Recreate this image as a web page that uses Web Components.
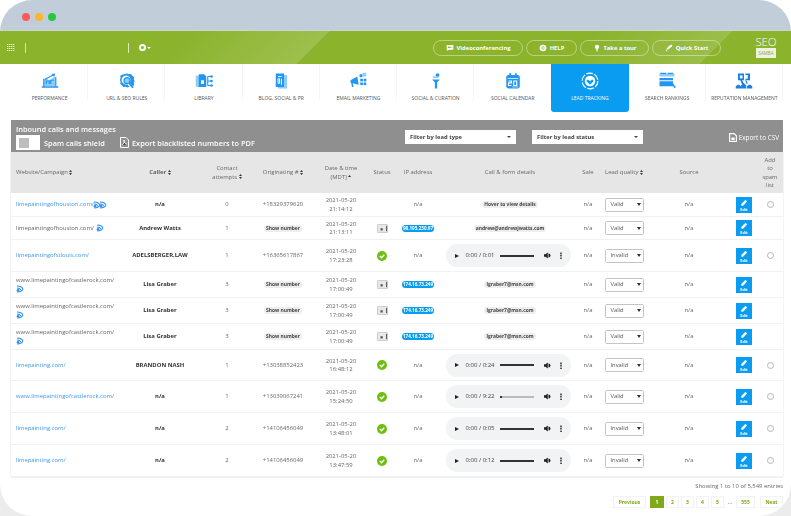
<!DOCTYPE html>
<html>
<head>
<meta charset="utf-8">
<title>Lead tracking</title>
<style>
	html, body { margin: 0; height: 516px; overflow: hidden; }
	body { background: linear-gradient(#fff 50%, #ececec 50%); font-family: "Open Sans", sans-serif; }
</style>
</head>
<body>
<seo-window>
	<app-header>
		<pill-button icon="video">Videoconferencing</pill-button>
		<pill-button icon="help" width="51">HELP</pill-button>
		<pill-button icon="tour" width="69">Take a tour</pill-button>
		<pill-button icon="rocket" width="69">Quick Start</pill-button>
	</app-header>
	<nav-bar>
		<nav-tab icon="performance">PERFORMANCE</nav-tab>
		<nav-tab icon="url">URL &amp; SEO RULES</nav-tab>
		<nav-tab icon="library">LIBRARY</nav-tab>
		<nav-tab icon="blog">BLOG, SOCIAL &amp; PR</nav-tab>
		<nav-tab icon="email">EMAIL MARKETING</nav-tab>
		<nav-tab icon="curation">SOCIAL &amp; CURATION</nav-tab>
		<nav-tab icon="calendar">SOCIAL CALENDAR</nav-tab>
		<nav-tab icon="lead" active>LEAD TRACKING</nav-tab>
		<nav-tab icon="search">SEARCH RANKINGS</nav-tab>
		<nav-tab icon="reputation">REPUTATION MANAGEMENT</nav-tab>
	</nav-bar>
	<lead-panel></lead-panel>
	<lead-table id="leads"></lead-table>
	<table-pager></table-pager>
</seo-window>

<script>
const ICONS = {
	performance: '<path fill="#8fccfa" d="M3 9h5l3 2 6-4v-1l3 1v12H3z"/><path fill="#2196f3" d="M1 19h22v2H1zM3 9h1.5v10H3zM19 7h1.5v12H19z"/><path fill="none" stroke="#2196f3" stroke-width="1.6" d="M7 16v-4h4v4M13 16v-5h4M5 10l11-6"/><path fill="#2196f3" d="M14 2.5l5-.5-1.5 4.5z"/>',
	url: '<path fill="#2196f3" d="M12 2l2.5 1 3-.5 1.500 2.500 2.500 1.500-.5 3 1 2.500-1 2.500.5 3-2 1-4-4a6 6 0 1 0-3 2l3 3-3 1-2.500-1-3 .5-1.500-2.500-2.500-1.500.5-3-1-2.500 1-2.500-.5-3 2.500-1.500L9 2.500z"/><circle cx="12" cy="11.5" r="4" fill="#8fccfa" stroke="#2196f3" stroke-width="1.6"/><path stroke="#2196f3" stroke-width="2.5" d="M15 15l5 6"/>',
	library: '<path fill="#8fccfa" d="M1 5h5v15H3a2 2 0 0 1-2-2z"/><path fill="#2196f3" d="M5 3h7l3 3v14H5z"/><path fill="#fff" d="M8 11h4v5H8z"/><path fill="none" stroke="#2196f3" stroke-width="1.5" d="M17 6h4M17 12h4M17 18h4M17 6v12"/><circle cx="22" cy="6" r="1.8" fill="#2196f3"/><circle cx="22" cy="12" r="1.8" fill="#2196f3"/><circle cx="22" cy="18" r="1.8" fill="#2196f3"/>',
	blog: '<path fill="#8fccfa" d="M15 4h5v18H8v-2h7z"/><path fill="#2196f3" d="M5 2h11v18H5z"/><path fill="none" stroke="#fff" stroke-width="1.3" d="M8 6h5M8 9v6h2V9zM12.5 9v8"/>',
	email: '<path fill="#2196f3" d="M2 11l9-5 2 11-8-2 1 5H4l-1-5.5-1-.5z"/><rect x="14" y="3" width="4" height="4" rx="1" fill="#2196f3"/><rect x="18" y="1" width="5" height="5" rx="1" fill="#8fccfa"/><rect x="15" y="9" width="3.5" height="3.5" fill="#2196f3"/><rect x="19.5" y="9" width="3.5" height="3.5" fill="#2196f3"/><rect x="15" y="14" width="3.5" height="3.5" fill="#2196f3"/><rect x="19.5" y="14" width="3.5" height="3.5" fill="#2196f3"/>',
	curation: '<circle cx="14" cy="4" r="2.5" fill="#2196f3"/><circle cx="9" cy="7" r="1.5" fill="#8fccfa"/><path fill="#2196f3" d="M7 10h10l-3.5 4v8h-3v-8z"/><path fill="#8fccfa" d="M9 6h6v2H9z"/>',
	calendar: '<rect x="3" y="4" width="18" height="18" rx="3" fill="#2196f3"/><path fill="#2196f3" d="M7 1.5h2.5V6H7zM14.5 1.5H17V6h-2.5z"/><path fill="#fff" d="M5 8h14v1H5z"/><path fill="none" stroke="#fff" stroke-width="1.5" d="M6 12h4v2.500H6V18h4M13 12h4v6h-4z"/><path fill="#8fccfa" d="M11 19h8v1.5h-8z"/>',
	lead: '<circle cx="12" cy="12" r="10.5" fill="none" stroke="#fff" stroke-width="1.6" stroke-dasharray="9 2"/><circle cx="12" cy="12" r="7" fill="#fff"/><path fill="#0a9cf0" d="M12 17l-5-5 2-2 3 2 3-2 2 2z"/>',
	search: '<path fill="#8fccfa" d="M2 2h20v4H2z"/><path fill="#2196f3" d="M2 8h18v11H2z"/><path fill="#fff" d="M2 11h18v1.3H2z"/><path stroke="#2196f3" stroke-width="2" d="M18 14l5 7"/><path fill="#2196f3" d="M3 1h8v1.5H3zM13 1h7v1.5h-7z"/>',
	reputation: '<path fill="#1a7fe0" d="M4 2h8v9H9.5l1.5 3 4 4v4H8v-4l1.5-1.5L7 11H4zM14 2h6v9h-6v-2h3V4h-3z"/><path fill="#1a7fe0" d="M1 22v-3l2.5-2h2L8 19v3zM16 22v-3l2.5-2h2L23 19v3z"/><path fill="#1a7fe0" d="M15 11l2 4-1.500 1-2-5z"/><rect x="6.5" y="4.5" width="3.5" height="4" fill="#fff"/>',
	video: '<path fill="#fff" d="M2 3h20v14H9l-5 4v-4H2z"/><path fill="#8bb32c" d="M6 8h8v4H6zM15 10l4-2v4z"/>',
	help: '<circle cx="12" cy="12" r="7.5" fill="none" stroke="#fff" stroke-width="5"/><path stroke="#fff" stroke-width="2" d="M12 2v20M2 12h20"/>',
	tour: '<circle cx="12" cy="9" r="6.5" fill="#fff"/><path fill="#fff" d="M10 15h4v7h-4z"/>',
	rocket: '<path fill="#fff" d="M22 2c-7 0-12 4-14 9l-5 2 3 1-1 3 3-1 1 3 2-5c5-2 11-6 11-12z"/><path fill="#fff" d="M2 22c0-3 1-4 3-4l1 1c0 2-1 3-4 3z"/>'
};

const svgIcon = (name, size) => `<svg width="${size}" height="${size}" viewBox="0 0 24 24" aria-hidden="true">${ICONS[name]}</svg>`;

class SeoWindow extends HTMLElement {
	constructor() {
		super();
		this.attachShadow({ mode: 'open' });
		this.shadowRoot.innerHTML = `
		<style>
			:host {
				display: block;
				height: 516px;
				background: #fff;
				border-radius: 32px;
				overflow: hidden;
				filter: blur(.5px);
			}
			.chrome {
				height: 31px;
				background: #c1ced9;
				border-bottom: 1px solid #cbd6d0;
				display: flex;
				align-items: center;
				gap: 5px;
				padding: 3px 0 0 22px;
				box-sizing: border-box;
			}
			.dot { width: 8px; height: 8px; border-radius: 50%; }
			.red { background: #fc5b57; }
			.amber { background: #fdb52b; }
			.green { background: #27c840; }
		</style>
		<div class="chrome"><i class="dot red"></i><i class="dot amber"></i><i class="dot green"></i></div>
		<slot></slot>`;
	}
}
customElements.define('seo-window', SeoWindow);

class AppHeader extends HTMLElement {
	constructor() {
		super();
		this.attachShadow({ mode: 'open' });
		this.shadowRoot.innerHTML = `
		<style>
			:host {
				display: flex;
				align-items: center;
				height: 33px;
				background:
					linear-gradient(135deg, transparent 130px, rgba(255,255,255,.16) 233px, transparent 233px),
					linear-gradient(135deg, transparent 420px, rgba(255,255,255,.14) 518px, transparent 518px),
					#8bb32c;
				color: #fff;
				font-family: "Open Sans", sans-serif;
			}
			.grid {
				width: 8px; height: 8px; margin-left: 7px;
				background:
					repeating-linear-gradient(90deg, transparent 0 1.5px, rgba(139,179,44,.75) 1.5px 2px),
					repeating-linear-gradient(#fff 0 1.5px, rgba(139,179,44,.75) 1.5px 2px);
			}
			.sep { width: 1px; height: 10px; background: rgba(255,255,255,.7); }
			.sep.one { margin-left: 10px; }
			.sep.two { margin-left: 102px; }
			.gear { margin-left: 10px; width: 7px; height: 7px; border-radius: 50%; border: 2px solid #fff; background: #8bb32c; box-sizing: border-box; }
			.caret { margin-left: 1px; border: 2px solid transparent; border-top-color: #fff; border-bottom: 0; }
			.pills { margin-left: 282px; display: flex; gap: 3px; }
			.logo {
				margin-left: 35px; width: 20px; display: flex; flex-direction: column; align-items: center;
				line-height: 1;
			}
			.seo { font-size: 11.5px; line-height: 10px; font-weight: 300; letter-spacing: -.1px; }
			.samba { margin-top: 1px; width: 20px; height: 10px; background: #eef3de; color: #8aa36a; font-size: 4.5px; line-height: 10px; text-align: center; }
		</style>
		<div class="grid"></div><div class="sep one"></div><div class="sep two"></div>
		<div class="gear"></div><div class="caret"></div>
		<div class="pills"><slot></slot></div>
		<div class="logo"><span class="seo">SEO</span><span class="samba">SAMBA</span></div>`;
	}
}
customElements.define('app-header', AppHeader);

class PillButton extends HTMLElement {
	constructor() {
		super();
		this.attachShadow({ mode: 'open' });
	}
	connectedCallback() {
		const width = this.getAttribute('width') || 90;
		this.shadowRoot.innerHTML = `
		<style>
			:host {
				display: flex;
				align-items: center;
				justify-content: center;
				gap: 3px;
				width: ${width}px;
				height: 16px;
				box-sizing: border-box;
				border: 1px solid rgba(255,255,255,.4);
				border-radius: 8px;
				font-size: 5.8px;
				font-weight: 700;
				white-space: nowrap;
			}
			svg { display: block; }
		</style>
		${svgIcon(this.getAttribute('icon'), 8)}<slot></slot>`;
	}
}
customElements.define('pill-button', PillButton);

class NavBar extends HTMLElement {
	constructor() {
		super();
		this.attachShadow({ mode: 'open' });
		this.shadowRoot.innerHTML = `
		<style>
			:host {
				display: grid;
				grid-template-columns: repeat(10, 1fr);
				height: 48px;
				margin: 0 8px 8px 11px;
				font-family: "Open Sans", sans-serif;
			}
		</style>
		<slot></slot>`;
	}
}
customElements.define('nav-bar', NavBar);

class NavTab extends HTMLElement {
	constructor() {
		super();
		this.attachShadow({ mode: 'open' });
	}
	connectedCallback() {
		const active = this.hasAttribute('active');
		this.shadowRoot.innerHTML = `
		<style>
			:host {
				display: flex;
				flex-direction: column;
				align-items: center;
				padding-top: 8px;
				box-sizing: border-box;
				font-size: 5px;
				white-space: nowrap;
				color: ${active ? '#fff' : '#555'};
				background: ${active ? '#0a9cf0' : 'transparent'};
				border-radius: 0 0 3px 3px;
			}
			:host(:not([active])) { box-shadow: inset -1px 0 0 #f6f6f6; height: 38px; }
			svg { display: block; }
			.label { margin-top: 4px; line-height: 8px; }
		</style>
		${svgIcon(this.getAttribute('icon'), 18)}<div class="label"><slot></slot></div>`;
	}
}
customElements.define('nav-tab', NavTab);

class LeadPanel extends HTMLElement {
	constructor() {
		super();
		this.attachShadow({ mode: 'open' });
		this.shadowRoot.innerHTML = `
		<style>
			:host {
				display: flex;
				height: 32px;
				margin: 0 8px 0 11px;
				padding-left: 5px;
				background: #8f8f8f;
				color: #fff;
				font-family: "Open Sans", sans-serif;
				font-size: 7.4px;
				font-weight: 600;
				box-sizing: border-box;
			}
			.left { width: 389px; padding-top: 5px; white-space: nowrap; }
			.title { line-height: 9px; height: 9px; }
			.tools { display: flex; align-items: center; margin-top: 1px; height: 15px; }
			.toggle { width: 24px; height: 15px; background: #fff; display: flex; align-items: center; padding-left: 3px; box-sizing: border-box; }
			.toggle i { width: 10px; height: 10px; background: #bdbdbd; }
			.shield { margin-left: 4px; width: 76px; }
			.pdf { width: 9px; height: 11px; margin-right: 3px; }
			.select {
				width: 111px; height: 14px; margin-top: 10px; background: #fff; color: #444;
				box-sizing: border-box; padding: 0 5px; display: flex; align-items: center; justify-content: space-between;
				font-size: 5.8px; font-weight: 700;
			}
			.select + .select { margin-left: 16px; }
			.select i { border: 2px solid transparent; border-top: 2.5px solid #444; border-bottom: 0; }
			.csv { margin-left: auto; padding-right: 4px; margin-top: 13px; display: flex; gap: 2px; align-items: center; font-size: 6.4px; font-weight: 400; height: 9px; white-space: nowrap; }
		</style>
		<div class="left">
			<div class="title">Inbound calls and messages</div>
			<div class="tools">
				<div class="toggle"><i></i></div>
				<span class="shield">Spam calls shield</span>
				<svg class="pdf" viewBox="0 0 9 11"><path fill="none" stroke="#fff" d="M.5.5h5.500l2.500 2.500v7.500h-8z"/><path stroke="#fff" d="M2 8c2-1 3-3 2-5 0 2 1 4 3 4"/></svg>
				<span>Export blacklisted numbers to PDF</span>
			</div>
		</div>
		<div class="select"><span>Filter by lead type</span><i></i></div>
		<div class="select"><span>Filter by lead status</span><i></i></div>
		<div class="csv">
			<svg width="8" height="9" viewBox="0 0 7 8"><path fill="none" stroke="#fff" d="M.5.5h4l2 2v5h-6z"/><path fill="#fff" d="M2 4h3v2.5H2z"/></svg>
			<span>Export to CSV</span>
		</div>`;
	}
}
customElements.define('lead-panel', LeadPanel);

class LeadTable extends HTMLElement {
	constructor() {
		super();
		this.attachShadow({ mode: 'open' });
		this.shadowRoot.innerHTML = `
		<style>
			:host {
				display: block;
				margin: 0 8px 0 11px;
				--cols: 109px 80px 54px 58px 58px 24px 48px 136px 20px 52px 78px 32px 23px;
				font-family: "Open Sans", sans-serif;
				font-size: 5.9px;
				line-height: 8.5px;
				color: #666;
				box-shadow: 0 1px 0 #f0f0f0, -1px 0 0 #f4f4f4, 1px 0 0 #f4f4f4;
			}
		</style>
		<slot></slot>`;
	}
}
customElements.define('lead-table', LeadTable);

class LeadRow extends HTMLElement {
	constructor() {
		super();
		this.attachShadow({ mode: 'open' });
		this.shadowRoot.innerHTML = `
		<style>
			:host {
				display: grid;
				grid-template-columns: var(--cols);
				align-items: center;
				justify-items: center;
				text-align: center;
				box-sizing: border-box;
				border-bottom: 1px solid #f1f1f1;
			}
			:host([head]) { background: #e6e6e6; border-bottom: 0; }
		</style>
		<slot></slot>`;
	}
}
customElements.define('lead-row', LeadRow);

class SourceIcon extends HTMLElement {
	constructor() {
		super();
		this.attachShadow({ mode: 'open' });
		this.shadowRoot.innerHTML = `
		<style>:host { display: inline-block; vertical-align: middle; width: 8px; height: 8px; } svg { display: block; }</style>
		<svg width="8" height="8" viewBox="0 0 8 8"><path fill="none" stroke="#2f8fee" stroke-width="1.1" d="M1 1c3 0 5 1 6 3M1 3c2 0 3 .5 4 2M1 7c3 0 5-1 6-3"/><circle cx="2" cy="5.2" r="1.3" fill="#2f8fee"/></svg>`;
	}
}
customElements.define('source-icon', SourceIcon);

class LeadChip extends HTMLElement {
	constructor() {
		super();
		this.attachShadow({ mode: 'open' });
		this.shadowRoot.innerHTML = `
		<style>
			:host {
				display: inline-block;
				padding: 0 2px;
				border-radius: 3px;
				background: #eee;
				color: #444;
				font-size: 4.9px;
				font-weight: 700;
				line-height: 7px;
				white-space: nowrap;
			}
			:host([ip]) {
				background: #0a9cf0;
				color: #fff;
				border-radius: 4px;
				padding: 0 1px;
				font-size: 4.6px;
				line-height: 7px;
			}
		</style>
		<slot></slot>`;
	}
}
customElements.define('lead-chip', LeadChip);

class StatusIcon extends HTMLElement {
	constructor() {
		super();
		this.attachShadow({ mode: 'open' });
	}
	connectedCallback() {
		const ok = this.getAttribute('type') === 'ok';
		this.shadowRoot.innerHTML = `
		<style>:host { display: block; } svg { display: block; }</style>
		${ok
			? '<svg width="10" height="10" viewBox="0 0 10 10"><circle cx="5" cy="5" r="5" fill="#6fbe12"/><path fill="none" stroke="#fff" stroke-width="1.4" d="M2.800 5l1.700 1.700 2.800-3"/></svg>'
			: '<svg width="11" height="9" viewBox="0 0 11 9"><rect width="11" height="9" rx="1.5" fill="#c8c8c8"/><rect x=".8" y=".8" width="8.500" height="7.4" fill="#e8e8e8"/><path fill="#555" d="M3.5 4.2h2.2v2.300H3.5zM9 2h.9v5H9z"/></svg>'}`;
	}
}
customElements.define('status-icon', StatusIcon);

class AudioBar extends HTMLElement {
	constructor() {
		super();
		this.attachShadow({ mode: 'open' });
	}
	connectedCallback() {
		const done = this.getAttribute('progress') || 100;
		this.shadowRoot.innerHTML = `
		<style>
			:host {
				display: flex;
				align-items: center;
				width: 125px;
				height: 23px;
				margin-right: 3px;
				background: #f1f3f4;
				border-radius: 12px;
				color: #444;
				font-size: 6px;
				white-space: nowrap;
				box-sizing: border-box;
				padding-left: 8.5px;
			}
			.play { border-left: 4px solid #222; border-top: 2.5px solid transparent; border-bottom: 2.5px solid transparent; }
			.time { margin-left: 7px; width: 34px; text-align: left; }
			.track { width: 34px; height: 2px; background: linear-gradient(90deg, #333 ${done}%, #bbb ${done}%); }
			svg { display: block; margin-left: 10.5px; }
			.dots { margin-left: 8.5px; width: 2px; height: 7px; background: radial-gradient(circle, #333 .9px, transparent 1px) 0 0 / 2px 2.5px; }
		</style>
		<div class="play"></div>
		<div class="time"><slot></slot></div>
		<div class="track"></div>
		<svg width="7" height="7" viewBox="0 0 7 7"><path fill="#222" d="M0 2.300h1.500L3.800.5v6L1.500 4.700H0z"/><path fill="#222" d="M4.500 1.500a2 2 0 0 1 0 4z"/></svg>
		<div class="dots"></div>`;
	}
}
customElements.define('audio-bar', AudioBar);

class QualitySelect extends HTMLElement {
	constructor() {
		super();
		this.attachShadow({ mode: 'open' });
		this.shadowRoot.innerHTML = `
		<style>
			:host {
				display: flex;
				align-items: center;
				justify-content: space-between;
				width: 39px;
				height: 14px;
				padding: 0 2px 0 5px;
				box-sizing: border-box;
				background: #fff;
				border: 1px solid #c4c4c4;
				border-radius: 1.5px;
				font-size: 5.8px;
				color: #555;
			}
			i { border: 2.5px solid transparent; border-top: 3px solid #333; border-bottom: 0; }
		</style>
		<span><slot></slot></span><i></i>`;
	}
}
customElements.define('quality-select', QualitySelect);

class EditButton extends HTMLElement {
	constructor() {
		super();
		this.attachShadow({ mode: 'open' });
		this.shadowRoot.innerHTML = `
		<style>
			:host {
				display: flex;
				flex-direction: column;
				align-items: center;
				width: 16px;
				height: 16px;
				background: #0a9cf0;
				color: #fff;
				font-size: 3.8px;
				font-weight: 700;
				line-height: 5px;
				padding-top: 2px;
				box-sizing: border-box;
			}
			svg { display: block; }
		</style>
		<svg width="8" height="8" viewBox="0 0 8 8"><path fill="#fff" d="M5.500.8l1.700 1.700-4.200 4.200H1.300V5z"/></svg><slot></slot>`;
	}
}
customElements.define('edit-button', EditButton);

class SpamRadio extends HTMLElement {
	constructor() {
		super();
		this.attachShadow({ mode: 'open' });
		this.shadowRoot.innerHTML = `
		<style>:host { display: block; width: 7px; height: 7px; margin-right: 3px; border: 1px solid #b5b5b5; border-radius: 50%; box-sizing: border-box; background: #fff; }</style>`;
	}
}
customElements.define('spam-radio', SpamRadio);

class TablePager extends HTMLElement {
	constructor() {
		super();
		this.attachShadow({ mode: 'open' });
		const pages = [['Previous', 33, 4], ['1', 14, 2], ['2', 13, 2], ['3', 13, 2], ['4', 13, 2], ['5', 13, 0]];
		const item = ([text, width, gap]) => `<span class="page ${text === '1' ? 'on' : ''}" style="width:${width}px;margin-right:${gap}px">${text}</span>`;
		this.shadowRoot.innerHTML = `
		<style>
			:host {
				display: block;
				margin: 0 8px 0 11px;
				font-family: "Open Sans", sans-serif;
				font-size: 5.9px;
				color: #666;
				text-align: right;
			}
			.info { padding-top: 5px; line-height: 8px; height: 14px; box-sizing: border-box; }
			.pages { display: flex; justify-content: flex-end; margin-top: 5px; }
			.page {
				height: 12px; line-height: 12px; text-align: center; box-sizing: border-box;
				box-shadow: inset 0 0 0 1px #f3f3f3; color: #7fa81a; font-weight: 700; font-size: 5px;
			}
			.on { background: #7fa81a; color: #fff; box-shadow: none; }
			.more { width: 12px; text-align: center; line-height: 12px; }
		</style>
		<div class="info">Showing 1 to 10 of 5,549 entries</div>
		<div class="pages">
			${pages.map(item).join('')}
			<span class="more">...</span>
			${item(['555', 19, 5])}
			${item(['Next', 23, 0])}
		</div>`;
	}
}
customElements.define('table-pager', TablePager);

const sort = '<svg width="3" height="5" viewBox="0 0 3 5" style="vertical-align:-.5px"><path fill="#333" d="M1.500 0L3 2H0zM1.500 5L3 3H0z"/></svg>';
const head = ['Website/Campaign ' + sort, '<b>Caller ' + sort + '</b>', 'Contact<br>attempts ' + sort, 'Originating # ' + sort, 'Date &amp; time<br>(MDT) <svg width="3" height="2" viewBox="0 0 3 2" style="vertical-align:2px"><path fill="#333" d="M1.500 0L3 2H0z"/></svg>', 'Status', 'IP address', 'Call &amp; form details', 'Sale', 'Lead quality ' + sort, 'Source', '', '<div style="margin-right:3px">Add<br>to<br>spam<br>list</div>'];

const rows = [
	{ h: 24, link: 1, site: 'limepaintingofhouston.com/<source-icon style="margin-left:-1px"></source-icon><source-icon style="margin-left:-2px"></source-icon>', caller: 'n/a', tries: 0, phone: '+18329379620', time: '21:14:12', status: '', ip: 'n/a', details: '<lead-chip>Hover to view details</lead-chip>', quality: 'Valid', radio: 1 },
	{ h: 23, site: 'limepaintingofhouston.com/ <source-icon></source-icon>', caller: 'Andrew Watts', tries: 1, phone: '<lead-chip>Show number</lead-chip>', time: '21:13:11', status: 'mail', ip: '<lead-chip ip>98.195.230.97</lead-chip>', details: '<lead-chip>andrew@andrewjwatts.com</lead-chip>', quality: 'Valid' },
	{ h: 32, link: 1, site: 'limepaintingofstlouis.com/', caller: 'ADELSBERGER,LAW', tries: 1, phone: '+16365617867', time: '17:23:28', status: 'ok', ip: 'n/a', audio: '0:00 / 0:01', quality: 'Invalid', radio: 1 },
	{ h: 26, site: 'www.limepaintingofcastlerock.com/<br><source-icon></source-icon>', caller: 'Lisa Graber', tries: 3, phone: '<lead-chip>Show number</lead-chip>', time: '17:00:49', status: 'mail', ip: '<lead-chip ip>174.16.73.249</lead-chip>', details: '<lead-chip>lgraber7@msn.com</lead-chip>', quality: 'Valid' },
	{ h: 26, site: 'www.limepaintingofcastlerock.com/<br><source-icon></source-icon>', caller: 'Lisa Graber', tries: 3, phone: '<lead-chip>Show number</lead-chip>', time: '17:00:49', status: 'mail', ip: '<lead-chip ip>174.16.73.249</lead-chip>', details: '<lead-chip>lgraber7@msn.com</lead-chip>', quality: 'Valid' },
	{ h: 26, site: 'www.limepaintingofcastlerock.com/<br><source-icon></source-icon>', caller: 'Lisa Graber', tries: 3, phone: '<lead-chip>Show number</lead-chip>', time: '17:00:49', status: 'mail', ip: '<lead-chip ip>174.16.73.249</lead-chip>', details: '<lead-chip>lgraber7@msn.com</lead-chip>', quality: 'Valid' },
	{ h: 31, link: 1, site: 'limepainting.com/', caller: 'BRANDON NASH', tries: 1, phone: '+13038852423', time: '16:48:12', status: 'ok', ip: 'n/a', audio: '0:00 / 0:24', quality: 'Invalid', radio: 1 },
	{ h: 32, link: 1, site: 'www.limepaintingofcastlerock.com/', caller: 'n/a', tries: 1, phone: '+13039067241', time: '15:24:50', status: 'ok', ip: 'n/a', audio: '0:00 / 9:22', progress: 6, quality: 'Valid', radio: 1 },
	{ h: 32, link: 1, site: 'limepainting.com/', caller: 'n/a', tries: 2, phone: '+14106456049', time: '13:48:01', status: 'ok', ip: 'n/a', audio: '0:00 / 0:05', quality: 'Invalid', radio: 1 },
	{ h: 32, link: 1, site: 'limepainting.com/', caller: 'n/a', tries: 2, phone: '+14106456049', time: '13:47:59', status: 'ok', ip: 'n/a', audio: '0:00 / 0:12', quality: 'Invalid', radio: 1 }
];

const headRow = `<lead-row head style="height:41px">${head.map((text, i) => `<div style="${i === 0 ? 'justify-self:start;padding-left:5px;white-space:nowrap' : ''}">${text}</div>`).join('')}</lead-row>`;

const bodyRows = rows.map(r => `
	<lead-row style="height:${r.h}px">
		<div style="justify-self:start;text-align:left;padding-left:5px;white-space:nowrap;${r.link ? 'color:#3f97ea' : ''}">${r.site}</div>
		<div style="font-weight:700;color:#333">${r.caller}</div>
		<div>${r.tries}</div>
		<div>${r.phone}</div>
		<div>2021-05-20<br>${r.time}</div>
		<div>${r.status ? `<status-icon type="${r.status}"></status-icon>` : ''}</div>
		<div>${r.ip}</div>
		${r.audio ? `<audio-bar progress="${r.progress || 100}">${r.audio}</audio-bar>` : `<div>${r.details}</div>`}
		<div>n/a</div>
		<quality-select>${r.quality}</quality-select>
		<div>n/a</div>
		<edit-button>Edit</edit-button>
		${r.radio ? '<spam-radio></spam-radio>' : '<div></div>'}
	</lead-row>`).join('');

document.getElementById('leads').innerHTML = headRow + bodyRows;
</script>
</body>
</html>
